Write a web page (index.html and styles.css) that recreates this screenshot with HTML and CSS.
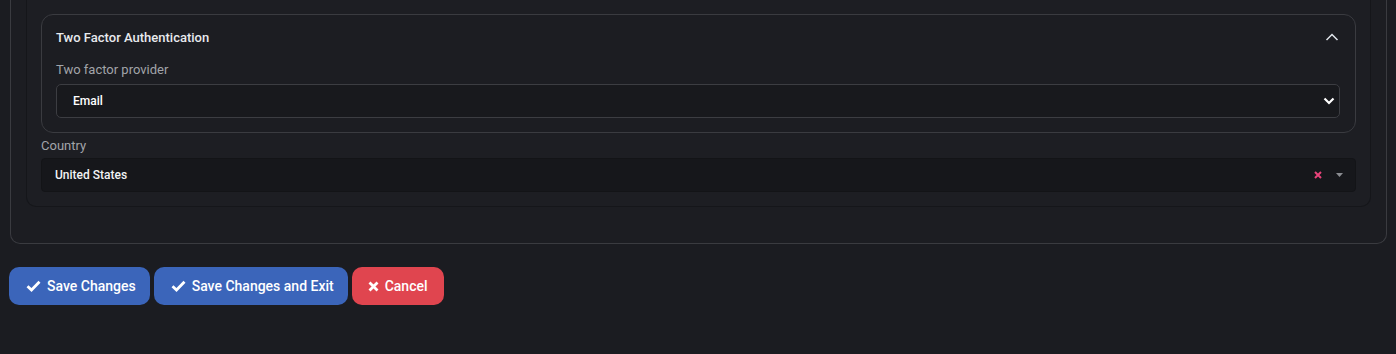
FILE: index.html
```html
<!DOCTYPE html>
<html lang="en">
<head>
<meta charset="utf-8">
<title>Settings</title>
<link rel="stylesheet" href="styles.css">
</head>
<body>
<div class="page">
  <div class="outer-card">
    <div class="inner-box">
      <div class="tfa-card">
        <div class="tfa-header">
          <span class="tfa-title">Two Factor Authentication</span>
          <svg class="chev-up" width="14" height="10" viewBox="0 0 14 10"><path d="M1.5 8 L7 2.5 L12.5 8" fill="none" stroke="#dfe3ea" stroke-width="1.5"/></svg>
        </div>
        <label class="field-label">Two factor provider</label>
        <div class="select-box">
          <span class="select-value">Email</span>
          <svg class="chev-down" width="12" height="8" viewBox="0 0 12 8"><path d="M1.5 1.5 L6 6 L10.5 1.5" fill="none" stroke="#ffffff" stroke-width="2.2"/></svg>
        </div>
      </div>
      <div class="country-field">
        <label class="field-label country-label">Country</label>
        <div class="combo-box">
          <span class="combo-value">United States</span>
          <span class="combo-icons">
            <svg class="clear-x" width="8" height="8" viewBox="0 0 8 8"><path d="M1 1 L7 7 M7 1 L1 7" stroke="#e8437a" stroke-width="2"/></svg>
            <svg class="caret" width="7" height="4" viewBox="0 0 7 4"><path d="M0 0 H7 L3.5 4 Z" fill="#8a8c91"/></svg>
          </span>
        </div>
      </div>
    </div>
  </div>
  <div class="actions">
    <button class="btn btn-primary">
      <svg class="btn-icon" width="15" height="12" viewBox="0 0 15 12"><path d="M1.5 6.2 L5.5 10 L13.5 1.8" fill="none" stroke="#fff" stroke-width="2.8"/></svg>
      Save Changes
    </button>
    <button class="btn btn-primary">
      <svg class="btn-icon" width="15" height="12" viewBox="0 0 15 12"><path d="M1.5 6.2 L5.5 10 L13.5 1.8" fill="none" stroke="#fff" stroke-width="2.8"/></svg>
      Save Changes and Exit
    </button>
    <button class="btn btn-danger">
      <svg class="btn-icon" width="11" height="11" viewBox="0 0 11 11"><path d="M1.5 1.5 L9.5 9.5 M9.5 1.5 L1.5 9.5" fill="none" stroke="#fff" stroke-width="2.8"/></svg>
      Cancel
    </button>
  </div>
</div>
</body>
</html>
```

FILE: styles.css
```css
html, body {
  margin: 0;
  padding: 0;
  background: #1b1c21;
}
body {
  font-family: Roboto, "Liberation Sans", Arial, sans-serif;
  color: #e4e6eb;
  font-size: 13px;
}
.page {
  padding: 0 9px 0 10px;
}
.outer-card {
  border: 1px solid #3a3b40;
  border-top: none;
  border-radius: 0 0 10px 10px;
  padding: 0 15px 36px 15px;
  background: #1c1d22;
}
.inner-box {
  border: 1px solid #15161a;
  border-top: none;
  border-radius: 0 0 10px 10px;
  padding: 14px 14px 14px 14px;
  background: #1d1e23;
}
.tfa-card {
  border: 1px solid #3a3b40;
  border-radius: 12px;
  padding: 11px 15px 14px 14px;
  background: #1c1d22;
}
.tfa-header {
  display: flex;
  justify-content: space-between;
  align-items: center;
  height: 22px;
}
.tfa-title {
  font-weight: 500;
  font-size: 13px;
  color: #e8eaee;
}
.chev-up {
  margin-right: 1px;
}
.field-label {
  display: block;
  color: #a2a4a9;
  font-size: 13px;
  line-height: 16px;
}
.tfa-card .field-label {
  margin-top: 14px;
  margin-bottom: 6px;
}
.select-box {
  display: flex;
  justify-content: space-between;
  align-items: center;
  height: 32px;
  border: 1px solid #3c3d42;
  border-radius: 5px;
  background: #18191d;
  padding: 0 4px 0 16px;
}
.select-value {
  font-size: 12px;
  font-weight: 500;
  color: #ffffff;
}
.country-field {
  margin-top: 5px;
}
.country-label {
  margin-bottom: 4px;
}
.combo-box {
  display: flex;
  justify-content: space-between;
  align-items: center;
  height: 32px;
  border: 1px solid #131417;
  border-radius: 4px;
  background: #16171b;
  padding: 0 12px 0 13px;
}
.combo-value {
  font-size: 12px;
  font-weight: 500;
  color: #f2f3f5;
}
.combo-icons {
  display: flex;
  align-items: center;
  gap: 14px;
}
.actions {
  display: flex;
  gap: 4px;
  margin-top: 23px;
  margin-left: -1px;
}
.btn {
  display: inline-flex;
  align-items: center;
  gap: 6px;
  height: 38px;
  padding: 0 14px 0 17px;
  border: none;
  border-radius: 10px;
  font-family: Roboto, "Liberation Sans", Arial, sans-serif;
  font-size: 14px;
  font-weight: 500;
  color: #ffffff;
  cursor: pointer;
}
.btn-primary {
  background: #3b65ba;
}
.btn-danger {
  background: #e0454f;
  padding: 0 16px 0 16px;
}
.btn-icon {
  flex: none;
}
```
